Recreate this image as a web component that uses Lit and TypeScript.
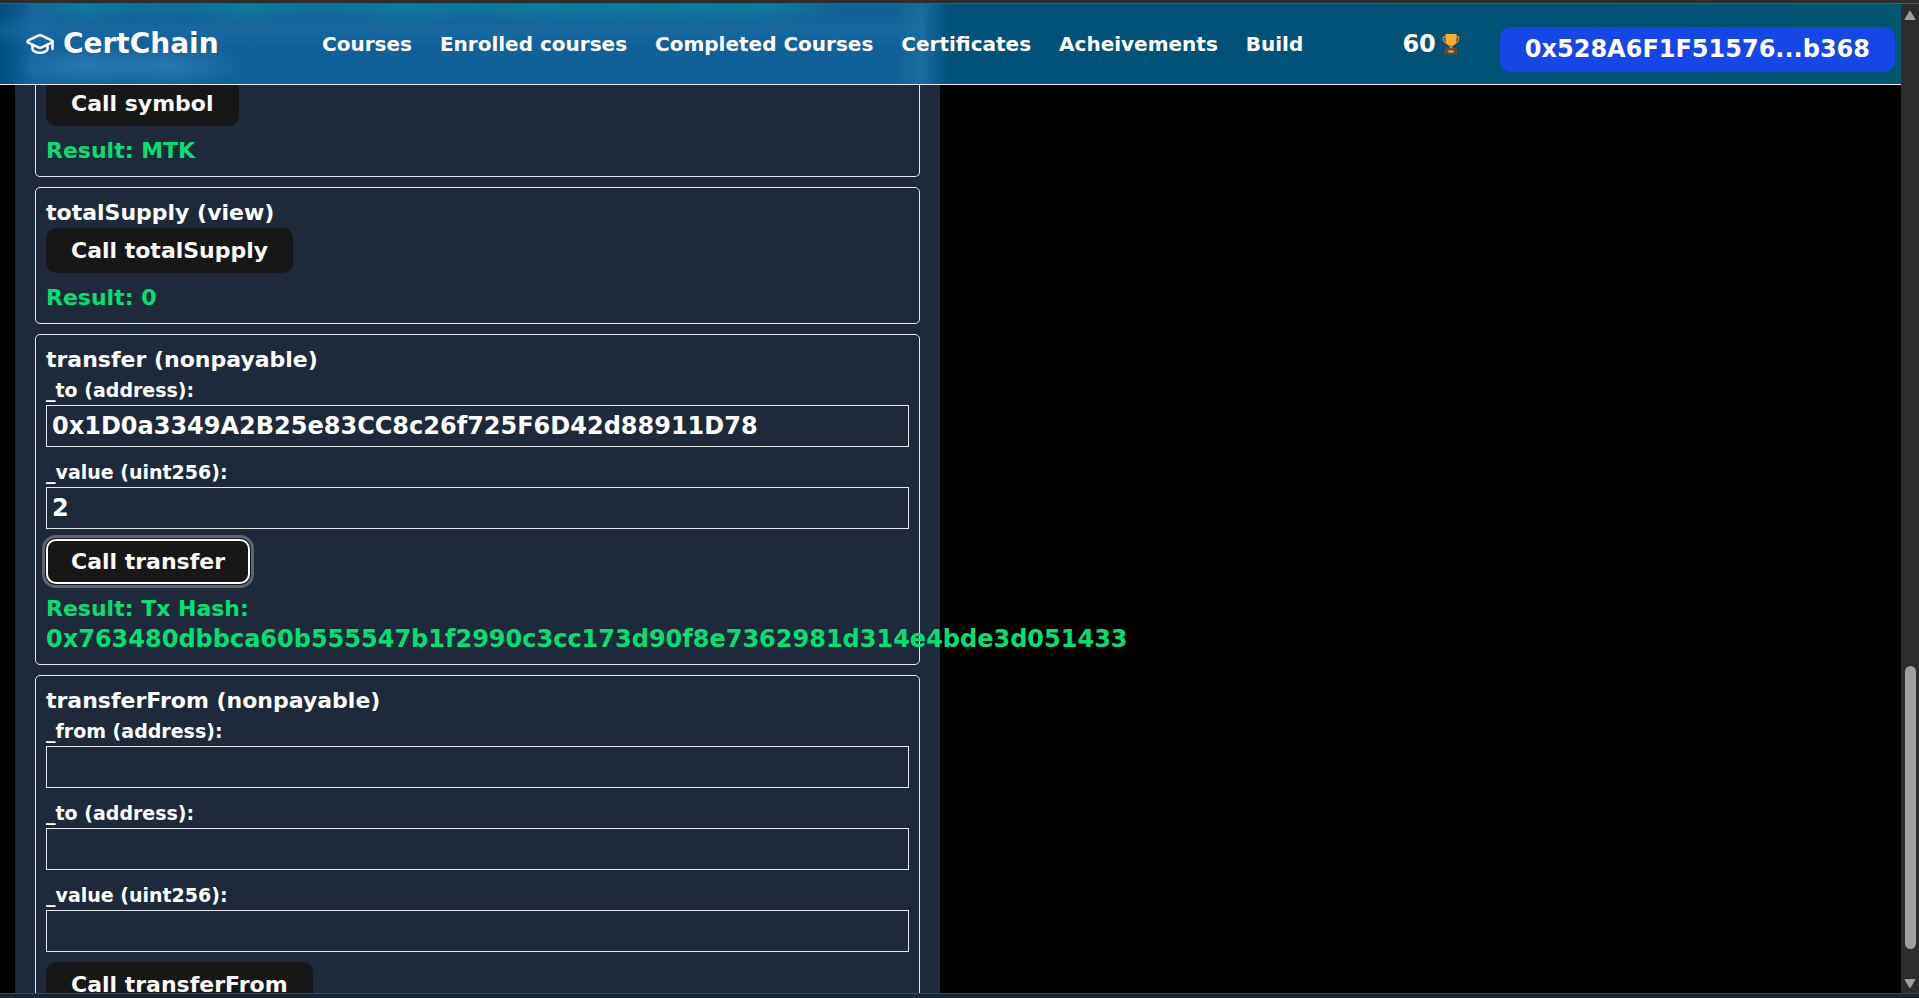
import { LitElement, html, css, nothing } from "lit";
import { customElement } from "lit/decorators.js";

interface Field {
  name: string;
  type: string;
  value: string;
}

interface ContractFn {
  name: string;
  kind: string;
  fields: Field[];
  result?: string;
  hash?: string;
  active?: boolean;
}

const FUNCTIONS: ContractFn[] = [
  { name: "symbol", kind: "", fields: [], result: "MTK" },
  { name: "totalSupply", kind: "view", fields: [], result: "0" },
  {
    name: "transfer",
    kind: "nonpayable",
    fields: [
      { name: "_to", type: "address", value: "0x1D0a3349A2B25e83CC8c26f725F6D42d88911D78" },
      { name: "_value", type: "uint256", value: "2" },
    ],
    result: "Tx Hash:",
    hash: "0x763480dbbca60b555547b1f2990c3cc173d90f8e7362981d314e4bde3d051433",
    active: true,
  },
  {
    name: "transferFrom",
    kind: "nonpayable",
    fields: [
      { name: "_from", type: "address", value: "" },
      { name: "_to", type: "address", value: "" },
      { name: "_value", type: "uint256", value: "" },
    ],
  },
];

const LINKS = [
  "Courses",
  "Enrolled courses",
  "Completed Courses",
  "Certificates",
  "Acheivements",
  "Build",
];

@customElement("app-root")
export class AppRoot extends LitElement {
  static styles = css`
    :host {
      display: flex;
      flex-direction: column;
      height: 100vh;
      overflow: hidden;
      background: #000;
      color: #fff;
      font: 700 22px/30px "DejaVu Sans", sans-serif;
    }
    * {
      box-sizing: border-box;
    }
    .top-edge {
      flex: none;
      height: 4px;
      background: #2e2e2e;
      border-bottom: 1px solid #5b5552;
    }
    .bottom-edge {
      flex: none;
      height: 5px;
      background: #162639;
      border-top: 1px solid #39495a;
    }
    .window {
      flex: 1;
      min-height: 0;
      display: flex;
    }
    .page {
      flex: 1;
      min-width: 0;
      display: flex;
      flex-direction: column;
      overflow: hidden;
    }
    header {
      flex: none;
      display: flex;
      align-items: center;
      height: 81px;
      padding: 0 6px 0 25px;
      border-bottom: 1px solid #e5e7eb;
      background:
        radial-gradient(ellipse 70px 22px at 85px 62px, #2f7db7cc, transparent),
        radial-gradient(ellipse 80px 22px at 165px 62px, #2f7db7cc, transparent),
        radial-gradient(ellipse 60px 20px at 85px 0, #0c7f9f, transparent),
        radial-gradient(ellipse 70px 16px at 155px 0, #0c7f9faa, transparent),
        radial-gradient(ellipse 80px 20px at 245px 0, #0c7f9f, transparent),
        radial-gradient(ellipse 90px 16px at 330px 0, #0c7f9faa, transparent),
        radial-gradient(ellipse 80px 22px at 405px 0, #0c7f9f, transparent),
        radial-gradient(ellipse 90px 17px at 475px 0, #0c7f9fcc, transparent),
        radial-gradient(ellipse 90px 20px at 545px 0, #0c7f9f, transparent),
        radial-gradient(ellipse 90px 20px at 620px 0, #0c7f9f, transparent),
        radial-gradient(ellipse 90px 20px at 695px 0, #0c7f9f, transparent),
        radial-gradient(ellipse 80px 20px at 765px 0, #0c7f9f, transparent),
        linear-gradient(180deg, transparent 10px, #1d6fa680 26px, transparent 44px) 0 0 / 925px 100% no-repeat,
        linear-gradient(90deg, #004d80 0, #0a5a93 18px, #1865a0 34px, #10619a 60px, #10619a 895px, #186c9f 922px, #00527b 950px, #005277 1500px, #00566f 100%);
    }
    .brand {
      display: flex;
      align-items: center;
      gap: 8px;
      width: 297px;
      font-size: 28px;
    }
    .brand svg {
      width: 30px;
      height: 30px;
    }
    nav {
      flex: 1;
      display: flex;
      gap: 28px;
      font-size: 20px;
    }
    a {
      color: inherit;
      text-decoration: none;
      white-space: nowrap;
    }
    .points {
      display: flex;
      align-items: center;
      gap: 6px;
      margin-right: 40px;
      font-size: 24px;
    }
    .points svg {
      width: 18px;
      height: 22px;
    }
    button {
      display: block;
      height: 45px;
      padding: 0 25px;
      border: 0;
      border-radius: 10px;
      background: #171717;
      color: #fafafa;
      font: inherit;
      white-space: nowrap;
    }
    .wallet {
      margin-top: 10px;
      background: #1447e6;
      color: #fff;
      font-size: 24px;
    }
    main {
      flex: 1;
      min-height: 0;
      display: flex;
      flex-direction: column;
      padding-left: 15px;
    }
    .panel {
      width: calc(50% - 18px);
      flex: 1;
      min-height: 0;
      display: flex;
      flex-direction: column;
      gap: 10px;
      padding: 0 20px;
      background: #1e2939;
    }
    section {
      flex: none;
      padding: 10px;
      border: 1px solid #e5e7eb;
      border-radius: 5px;
    }
    section.cut {
      padding-top: 0;
      border-top: 0;
      border-radius: 0 0 5px 5px;
    }
    .cut button {
      height: 41px;
      padding-bottom: 4px;
      border-radius: 0 0 10px 10px;
    }
    h3,
    p {
      margin: 0;
      font: inherit;
    }
    label {
      display: block;
      font-size: 19px;
    }
    input {
      display: block;
      width: 100%;
      height: 42px;
      margin-bottom: 10px;
      padding: 5px;
      border: 1px solid #e5e7eb;
      border-radius: 0;
      background: transparent;
      color: #fff;
      font: inherit;
      font-size: 24px;
      outline: none;
    }
    .active {
      border: 2px solid #fff;
      padding: 0 23px;
      box-shadow: 0 0 0 1px #171717, 0 0 0 4px #5f6670;
    }
    .result {
      margin-top: 10px;
      color: #05df72;
    }
    .hash {
      color: #05df72;
      font-size: 24px;
      white-space: nowrap;
    }
    .scrollbar {
      flex: none;
      width: 18px;
      display: flex;
      flex-direction: column;
      align-items: center;
      background: #2c2c2c;
      padding: 6px 0 4px;
    }
    .scrollbar svg {
      width: 12px;
      height: 11px;
    }
    .track {
      flex: 1;
      width: 11px;
      display: flex;
      flex-direction: column;
    }
    .before {
      flex: 645;
    }
    .thumb {
      flex: 283;
      border-radius: 6px;
      background: #9f9f9f;
    }
    .after {
      flex: 29;
    }
  `;

  private renderFn(fn: ContractFn) {
    return html`
      <section class=${fn.kind ? "" : "cut"}>
        ${fn.kind ? html`<h3>${fn.name} (${fn.kind})</h3>` : nothing}
        ${fn.fields.map((f) => {
          const id = `${fn.name}-${f.name}`;
          return html`
            <label for=${id}>${f.name} (${f.type}):</label>
            <input id=${id} type="text" .value=${f.value} />
          `;
        })}
        <button class=${fn.active ? "active" : ""}>Call ${fn.name}</button>
        ${fn.result ? html`<p class="result">Result: ${fn.result}</p>` : nothing}
        ${fn.hash ? html`<p class="hash">${fn.hash}</p>` : nothing}
      </section>
    `;
  }

  render() {
    return html`
      <div class="top-edge"></div>
      <div class="window">
        <div class="page">
          <header>
            <a class="brand" href="#">
              <svg viewBox="0 0 24 24" fill="none" stroke="#fff" stroke-width="2" stroke-linecap="round" stroke-linejoin="round" aria-hidden="true">
                <path d="M21.42 10.922a1 1 0 0 0-.019-1.838L12.83 5.18a2 2 0 0 0-1.66 0L2.6 9.08a1 1 0 0 0 0 1.832l8.57 3.908a2 2 0 0 0 1.66 0z" />
                <path d="M22 10v6" />
                <path d="M6 12.5V16a6 3 0 0 0 12 0v-3.5" />
              </svg>
              <span>CertChain</span>
            </a>
            <nav>${LINKS.map((l) => html`<a href="#">${l}</a>`)}</nav>
            <div class="points">
              <span>60</span>
              <svg viewBox="0 0 18 22" aria-hidden="true">
                <path d="M4 4H1.5v3Q2 10 6 10.500M14 4h2.500v3Q16 10 12 10.500" fill="none" stroke="#d9822b" stroke-width="1.400" />
                <path d="M3.500 1h11v6q0 4-4 6h-3q-4-2-4-6z" fill="#ffac33" />
                <path d="M7.500 12h3v4h-3z" fill="#e08a2b" />
                <path d="M3 15h12l1 6.500H2z" fill="#6d4534" />
                <path d="M6.500 17.500h5v2h-5z" fill="#ffac33" />
              </svg>
            </div>
            <button class="wallet">0x528A6F1F51576...b368</button>
          </header>
          <main>
            <div class="panel">${FUNCTIONS.map((f) => this.renderFn(f))}</div>
          </main>
        </div>
        <div class="scrollbar" aria-hidden="true">
          <svg viewBox="0 0 12 11"><path d="M6 1 11 9.500H1z" fill="#9f9f9f" stroke="#9f9f9f" stroke-linejoin="round" /></svg>
          <div class="track">
            <div class="before"></div>
            <div class="thumb"></div>
            <div class="after"></div>
          </div>
          <svg viewBox="0 0 12 11"><path d="M6 10 11 1.500H1z" fill="#9f9f9f" stroke="#9f9f9f" stroke-linejoin="round" /></svg>
        </div>
      </div>
      <div class="bottom-edge"></div>
    `;
  }
}
